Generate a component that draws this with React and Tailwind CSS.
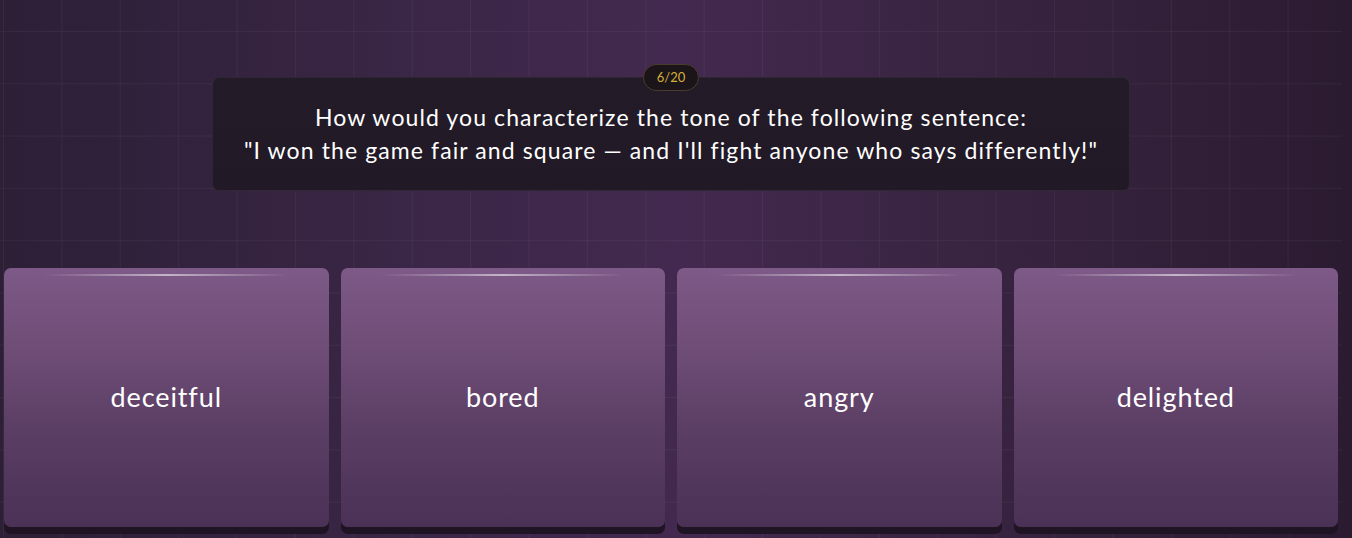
import React from 'react';

const answers = ['deceitful', 'bored', 'angry', 'delighted'];

function AnswerCard({ label }) {
  return (
    <button
      type="button"
      className="relative h-[259px] rounded-[7px] bg-[linear-gradient(to_bottom,#7d5a87_0%,#6c4b74_35%,#5a3d63_65%,#4a3155_100%)] shadow-[0_7px_0_#1f1424] flex items-center justify-center text-white text-[27px] tracking-[0.9px] font-['Lato',sans-serif]"
    >
      <span className="absolute top-[6px] left-[40px] right-[40px] h-[2px] bg-[linear-gradient(to_right,transparent,rgba(255,255,255,0.55),transparent)]" />
      {label}
    </button>
  );
}

export default function App() {
  return (
    <main className="min-h-[538px] w-full bg-[linear-gradient(to_right,#2c1f36_0%,#3a2646_30%,#43294f_50%,#37233f_75%,#2b1b31_100%)] font-['Lato',sans-serif]">
      <div className="min-h-[538px] w-[1342px] bg-[image:linear-gradient(to_right,rgba(255,255,255,0.045)_1px,transparent_1px),linear-gradient(to_bottom,rgba(255,255,255,0.045)_1px,transparent_1px)] bg-[size:58.4px_52.3px] bg-[position:3px_31px] pt-[77px]">
        <div className="relative mx-auto w-[918px] h-[114px] rounded-[7px] border border-[rgba(255,255,255,0.06)] bg-[linear-gradient(to_bottom,#241b29,#211925)] flex flex-col items-center justify-center text-white text-[23px] tracking-[1.1px] leading-[33px]">
          <div className="absolute -top-[14px] left-1/2 -translate-x-1/2 h-[27px] w-[56px] rounded-full bg-[#1b1419] border border-[#4a3d2c] flex items-center justify-center text-[13px] tracking-normal text-[#d4b13a]">
            6/20
          </div>
          <p>How would you characterize the tone of the following sentence:</p>
          <p>"I won the game fair and square — and I'll fight anyone who says differently!"</p>
        </div>

        <div className="mt-[77px] px-[4px] grid grid-cols-4 gap-3">
          {answers.map((a) => (
            <AnswerCard key={a} label={a} />
          ))}
        </div>
      </div>
    </main>
  );
}
